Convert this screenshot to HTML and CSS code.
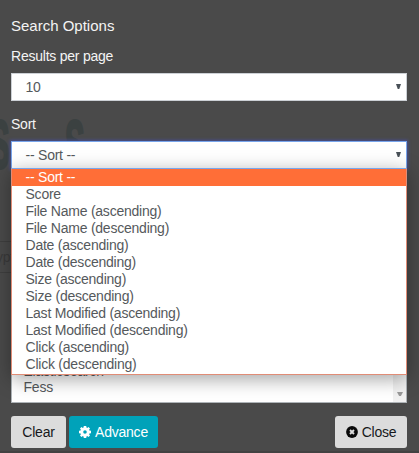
FILE: index.html
```html
<!DOCTYPE html>
<html lang="en">
<head>
<meta charset="utf-8">
<title>Search Options</title>
<link rel="stylesheet" href="styles.css">
</head>
<body>
<div class="backdrop" aria-hidden="true">
  <span class="logo-letter first">S</span>
  <span class="logo-letter second">S</span>
  <div class="page-row">ypt</div>
</div>
<main class="panel">
  <h1>Search Options</h1>
  <div class="label">Results per page</div>
  <div class="select">10<i class="arrow"></i></div>
  <div class="label sort-label">Sort</div>
  <div class="select open">-- Sort --<i class="arrow"></i>
    <ul class="menu">
      <li class="selected">-- Sort --</li>
      <li>Score</li>
      <li>File Name (ascending)</li>
      <li>File Name (descending)</li>
      <li>Date (ascending)</li>
      <li>Date (descending)</li>
      <li>Size (ascending)</li>
      <li>Size (descending)</li>
      <li>Last Modified (ascending)</li>
      <li>Last Modified (descending)</li>
      <li>Click (ascending)</li>
      <li>Click (descending)</li>
    </ul>
  </div>
  <div class="listbox">
    <div class="items"><div>Elasticsearch</div><div>Fess</div></div>
    <div class="scrollbar"><i class="arrow"></i></div>
  </div>
  <footer>
    <button class="btn clear">Clear</button>
    <button class="btn advance"><svg width="12" height="12" viewBox="0 0 12 12"><path fill="#fff" fill-rule="evenodd" d="M4.8 0h2.4l.3 1.6.7.3 1.3-.9 1.5 1.5-.9 1.3.3.7 1.6.3v2.4l-1.6.3-.3.7.9 1.3-1.5 1.5-1.3-.9-.7.3-.3 1.6H4.8l-.3-1.6-.7-.3-1.3.9L1 9.500l.9-1.3-.3-.7L0 7.200V4.800l1.600-.3.3-.7L1 2.500 2.500 1l1.300.9.7-.3zM6 4.200a1.800 1.800 0 1 0 0 3.600 1.800 1.800 0 0 0 0-3.600z"/></svg>Advance</button>
    <button class="btn close"><svg width="12" height="12" viewBox="0 0 12 12"><circle cx="6" cy="6" r="5.900" fill="#0a0a0a"/><path d="M4 4l4 4M8 4L4 8" stroke="#ddd" stroke-width="1.900"/></svg>Close</button>
  </footer>
</main>
</body>
</html>
```
FILE: styles.css
```css
* { box-sizing: border-box; }
body {
  margin: 0;
  width: 419px;
  height: 453px;
  overflow: hidden;
  background: #4a4a4a;
  color: #f4f4f4;
  font: 14px/17px "Liberation Sans", Arial, sans-serif;
  letter-spacing: -.23px;
}
.backdrop {
  position: absolute;
  inset: 0;
  overflow: hidden;
  border-bottom: 2px solid #424242;
}
.logo-letter {
  position: absolute;
  top: 110px;
  font-size: 68px;
  line-height: 68px;
  font-weight: bold;
  color: #3b4141;
  -webkit-text-stroke: 3px #3b4141;
  transform: scaleX(.43);
  transform-origin: 0 0;
}
.first { left: -10px; }
.second { left: 65px; }
.page-row {
  position: absolute;
  top: 241px;
  left: 0;
  width: 12px;
  height: 32px;
  padding-top: 7px;
  border: solid #3f3f3f;
  border-width: 1px 0;
  color: #3a3a3a;
  text-indent: -4px;
  overflow: hidden;
}
.panel {
  position: relative;
  display: flex;
  flex-direction: column;
  height: 453px;
  padding: 17px 12px 0 11px;
}
h1 {
  margin: 0 0 13px;
  font-size: 15px;
  line-height: 18px;
  font-weight: normal;
  letter-spacing: 0;
}
.label { height: 17px; margin-bottom: 8px; }
.sort-label { margin-top: 15px; }
.select {
  position: relative;
  display: flex;
  align-items: center;
  justify-content: space-between;
  height: 28px;
  padding: 0 5px 0 13.5px;
  border: 1px solid #ccd0d5;
  background: #fff;
  color: #55595c;
}
.arrow {
  width: 5px;
  height: 5px;
  margin-bottom: 1px;
  background: #495057;
  clip-path: polygon(0 0, 100% 0, 65% 100%, 35% 100%);
}
.open {
  z-index: 1;
  border-color: #78a5ec;
  box-shadow: 0 0 3px 1px #484c91;
}
.menu {
  position: absolute;
  top: 26px;
  left: -1px;
  width: 396px;
  margin: 0;
  padding: 0 0 1px;
  list-style: none;
  border: 1px solid #e08c76;
  border-top-color: #78a5ec;
  background: #fff;
  box-shadow: 0 4px 18px rgba(0, 0, 0, .36);
}
.menu li { height: 17px; padding-left: 13.5px; }
.menu .selected { background: #ff6e37; color: #fff; }
.listbox {
  display: flex;
  height: 43px;
  margin-top: 191px;
  border: 1px solid #aeb3b7;
  background: #fff;
  color: #55595c;
  overflow: hidden;
}
.items { flex: 1; padding: 2px 0 0 11.5px; line-height: 16px; }
.scrollbar {
  display: flex;
  width: 13px;
  padding: 0 0 5px 4px;
  align-items: flex-end;
  background: #f1f1f1;
}
.scrollbar .arrow { width: 6px; height: 4px; background: #999; }
footer { display: flex; gap: 3px; margin-top: 13px; }
.btn {
  display: flex;
  align-items: center;
  justify-content: center;
  gap: 4px;
  height: 32px;
  padding: 0;
  border: 0;
  border-radius: 3px;
  background: #dcdcdc;
  color: #16181b;
  font: inherit;
  letter-spacing: inherit;
}
.clear { width: 55px; }
.advance { width: 89px; background: #00a2b9; color: #fff; }
.close { width: 72px; margin-left: auto; }
```
